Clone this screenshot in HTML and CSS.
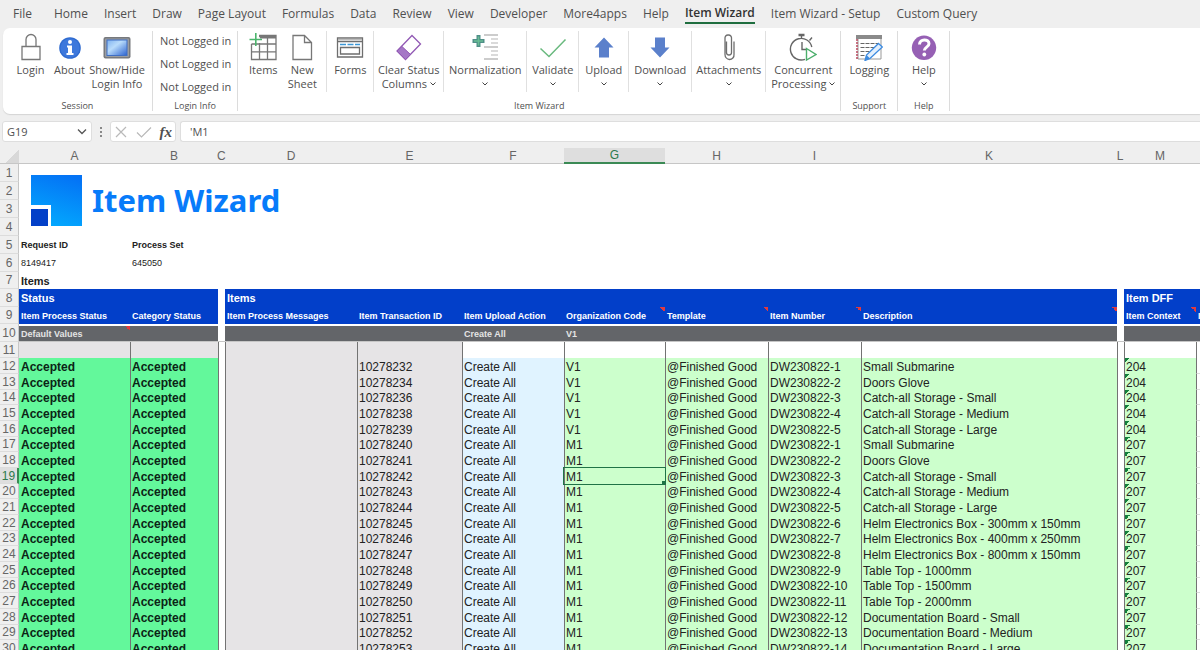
FILE: index.html
```html
<!DOCTYPE html>
<html lang="en">
<head>
<meta charset="utf-8">
<title>Item Wizard</title>
<link rel="stylesheet" href="styles.css">
</head>
<body>
<nav class="tabs">
  <button class="tab tab-file">File</button>
  <button class="tab">Home</button>
  <button class="tab">Insert</button>
  <button class="tab">Draw</button>
  <button class="tab">Page Layout</button>
  <button class="tab">Formulas</button>
  <button class="tab">Data</button>
  <button class="tab">Review</button>
  <button class="tab">View</button>
  <button class="tab">Developer</button>
  <button class="tab">More4apps</button>
  <button class="tab">Help</button>
  <button class="tab active">Item Wizard</button>
  <button class="tab">Item Wizard - Setup</button>
  <button class="tab">Custom Query</button>
</nav>

<section class="ribbon">
  <div class="group">
    <div class="tools tools-session">
      <button class="tool">
        <svg class="icon" viewBox="0 0 28 28" fill="none" stroke="#777" stroke-width="1.3"><path d="M5 13.5h18v13H5z"/><path d="M9 13.500V6.500a5 5 0 0 1 10 0v7"/></svg>
        <span>Login</span>
      </button>
      <button class="tool">
        <svg class="icon" viewBox="0 0 28 28"><circle cx="14" cy="15" r="10.800" fill="#2f6bd0"/><circle cx="14" cy="15" r="9.500" fill="#3d78dc"/><circle cx="14" cy="9" r="2" fill="#fff"/><path d="M11 12.500h5v7.500h1.500v2h-7v-2H12v-5.500h-1z" fill="#fff"/></svg>
        <span>About</span>
      </button>
      <button class="tool">
        <svg class="icon" viewBox="0 0 28 28"><defs><linearGradient id="screen" x1="0" y1="0" x2="1" y2="1"><stop offset="0" stop-color="#7fb2f0"/><stop offset=".4" stop-color="#b9dcfb"/><stop offset="1" stop-color="#2b62d0"/></linearGradient></defs><rect x=".5" y="4" width="27" height="21.500" rx="2" fill="#77797d"/><rect x="2" y="5.500" width="24" height="18.500" rx="1" fill="#9a9da1"/><rect x="4" y="7" width="20" height="15.500" fill="url(#screen)" stroke="#3f6fc4"/></svg>
        <span>Show/Hide<br>Login Info</span>
      </button>
    </div>
    <div class="group-name">Session</div>
  </div>

  <div class="group">
    <div class="login-info">
      <span>Not Logged in</span>
      <span>Not Logged in</span>
      <span>Not Logged in</span>
    </div>
    <div class="group-name">Login Info</div>
  </div>

  <div class="group">
    <div class="tools tools-wizard">
      <button class="tool">
        <svg class="icon" viewBox="0 0 28 28" fill="none" stroke="#777"><path d="M10 2.500h17v24H2.500V11M10 3.500h17M2.500 11h24.500M2.500 18.800h24.500M10.500 10v16.500M18.500 5v21.500" stroke-width="1.300"/><path d="M11 2.500h16v3H11z" fill="#777" stroke="none"/><path d="M6.800 0v13M.5 6.500h12.500" stroke="#4bb56c" stroke-width="1.600"/></svg>
        <span>Items</span>
      </button>
      <button class="tool tool-sheet">
        <svg class="icon" viewBox="0 0 28 28" fill="none" stroke="#777" stroke-width="1.300"><path d="M5 2.500h11.500l7 7v17H5zM16.500 2.500v7h7"/></svg>
        <span>New<br>Sheet</span>
      </button>
      <button class="tool divided">
        <svg class="icon" viewBox="0 0 28 28" fill="none" stroke="#6e6e6e" stroke-width="1.300"><path d="M1.500 5h25v19h-25zM1.500 8.500h25M4.500 14.500h19v6.500h-19z"/><path d="M2 6.500h24" stroke="#bbb"/><path d="M4 11.500h20" stroke="#3b97d6" stroke-dasharray="6 1.500"/></svg>
        <span>Forms</span>
      </button>
      <button class="tool divided">
        <svg class="icon" viewBox="0 0 28 28"><path d="M17 2.500 25.500 11 10.500 26.500 2 18z" fill="#fff" stroke="#9158b4" stroke-width="1.300"/><path d="M7 13.500 15.500 21.500 10.500 26.500 2 18z" fill="#a577c6" stroke="#9158b4"/></svg>
        <span>Clear Status<br>Columns<svg class="caret beside" viewBox="0 0 6 4"><path d="M.5.5 3 3 5.500.5"/></svg></span>
      </button>
      <button class="tool divided">
        <svg class="icon" viewBox="0 0 28 28" fill="none"><path d="M13 2h14M13 14h14M13 26h14" stroke="#999"/><path d="M20 6h7M20 10h7M20 18h7M20 22h7" stroke="#b5b5b5"/><path d="M7.500 2v12M1.500 8h12" stroke="#4f8f88" stroke-width="4"/><path d="M7.500 3.500v9M3 8h9" stroke="#68bd93" stroke-width="1.500"/></svg>
        <span>Normalization<br><svg class="caret" viewBox="0 0 6 4"><path d="M.5.5 3 3 5.500.5"/></svg></span>
      </button>
      <button class="tool divided">
        <svg class="icon" viewBox="0 0 28 28" fill="none" stroke="#69b97e" stroke-width="1.500"><path d="M1.500 15.500 10 23.500 26.500 6.500"/></svg>
        <span>Validate<br><svg class="caret" viewBox="0 0 6 4"><path d="M.5.5 3 3 5.500.5"/></svg></span>
      </button>
      <button class="tool divided">
        <svg class="icon" viewBox="0 0 28 28" fill="#5b80cb"><path d="M14 4.500 23.500 14.500H19V24.500H9V14.500H4.500z"/></svg>
        <span>Upload<br><svg class="caret" viewBox="0 0 6 4"><path d="M.5.5 3 3 5.500.5"/></svg></span>
      </button>
      <button class="tool divided">
        <svg class="icon" viewBox="0 0 28 28" fill="#5b80cb"><path d="M14 24.500 23.500 14.500H19V4.500H9V14.500H4.500z"/></svg>
        <span>Download<br><svg class="caret" viewBox="0 0 6 4"><path d="M.5.5 3 3 5.500.5"/></svg></span>
      </button>
      <button class="tool divided">
        <svg class="icon" viewBox="0 0 28 28" fill="none" stroke="#6e6e6e" stroke-width="1.300"><path d="M11.500 8.500v11a2.500 2.500 0 0 0 5 0V5.500a3 3 0 0 0-3-3.500h-.5a3 3 0 0 0-3 3.500v16a5 5 0 0 0 4.500 5 4.500 4.500 0 0 0 4.500-5V8.500"/></svg>
        <span>Attachments<br><svg class="caret" viewBox="0 0 6 4"><path d="M.5.5 3 3 5.500.5"/></svg></span>
      </button>
      <button class="tool divided">
        <svg class="icon" viewBox="0 0 28 28" fill="none" stroke="#666" stroke-width="1.400"><path d="M16 26.300A10.800 10.800 0 1 1 22.800 14M12.500 2v3.500M13 9v7.500h4M20.500 7.500l2.500-3"/><path d="M9.500 2h6" stroke-width="2.500"/><path d="M17.500 15.500 27 21.500l-9.500 5.500z" fill="#fff" stroke="#4bae6b"/></svg>
        <span>Concurrent<br>Processing<svg class="caret beside" viewBox="0 0 6 4"><path d="M.5.5 3 3 5.500.5"/></svg></span>
      </button>
    </div>
    <div class="group-name">Item Wizard</div>
  </div>

  <div class="group">
    <div class="tools tools-single">
      <button class="tool">
        <svg class="icon" viewBox="0 0 28 28" fill="none" stroke="#666"><path d="M3 2.500h23V26H3z" stroke="#999"/><path d="M1 2h26v4H1z" fill="#8a8a8a" stroke="none"/><path d="M2 6v20" stroke="#b8455c" stroke-width="1.500" stroke-dasharray="2 1"/><path d="M5.500 10.500h18M5.500 14.500h14M5.500 18.500h9M5.500 22.500h5" stroke-dasharray="4 1"/><path d="M23.500 10.500 27.300 14 15 25.500l-5 2 1.500-5.500z" fill="#e4f0fd" stroke="#3d8be0" stroke-width="1.300"/><path d="M10 27.500l1.500-5.500 3.500 3.500z" fill="#3d8be0" stroke="none"/></svg>
        <span>Logging</span>
      </button>
    </div>
    <div class="group-name">Support</div>
  </div>

  <div class="group">
    <div class="tools tools-help">
      <button class="tool">
        <svg class="icon" viewBox="0 0 28 28"><circle cx="14" cy="14.800" r="12.200" fill="#9660b4"/><path d="M9.500 11.500c0-6 9.500-6 9.500-.8 0 3.300-4.700 3.500-4.700 6.800" fill="none" stroke="#fff" stroke-width="3"/><circle cx="14.300" cy="21.500" r="1.900" fill="#fff"/></svg>
        <span>Help<br><svg class="caret" viewBox="0 0 6 4"><path d="M.5.5 3 3 5.500.5"/></svg></span>
      </button>
    </div>
    <div class="group-name">Help</div>
  </div>
</section>

<section class="formula-bar">
  <div class="name-box">
    <input class="name-input" aria-label="Name box" value="G19">
    <button class="name-drop" aria-label="Show names"><svg width="10" height="6" viewBox="0 0 10 6" fill="none" stroke="#555" stroke-width="1.300"><path d="M1 .5 5 4.500 9 .5"/></svg></button>
  </div>
  <svg class="grip" viewBox="0 0 2 12" fill="#888"><path d="M0 1h2v2H0zM0 5h2v2H0zM0 9h2v2H0z"/></svg>
  <div class="entry-buttons">
    <button class="entry" aria-label="Cancel"><svg width="14" height="14" viewBox="0 0 14 14" fill="none" stroke="#b9b9b9" stroke-width="1.200"><path d="M2 2l10 10M12 2 2 12"/></svg></button>
    <button class="entry" aria-label="Enter"><svg width="16" height="14" viewBox="0 0 16 14" fill="none" stroke="#b9b9b9" stroke-width="1.200"><path d="M1 7.500 5.500 12 15 2.500"/></svg></button>
    <button class="entry fx" aria-label="Insert function">fx</button>
  </div>
  <input class="formula" aria-label="Formula" value="'M1">
</section>

<main class="sheet">
  <table class="grid">
    <colgroup>
      <col class="w-num"><col class="w-a"><col class="w-b"><col class="w-gap"><col class="w-d"><col class="w-e"><col class="w-f"><col class="w-g"><col class="w-h"><col class="w-i"><col class="w-k"><col class="w-gap"><col class="w-m"><col>
    </colgroup>
    <thead>
      <tr class="letters">
        <th class="corner"></th><th>A</th><th>B</th><th class="narrow">C</th><th>D</th><th>E</th><th>F</th><th class="current">G</th><th>H</th><th>I</th><th>K</th><th class="narrow">L</th><th>M</th><th></th>
      </tr>
    </thead>
    <tbody>
      <tr class="tall"><th>1</th><td colspan="13" rowspan="4">
        <div class="brand">
          <svg class="logo" viewBox="0 0 51 51"><defs><linearGradient id="tile" x1=".7" y1="0" x2=".4" y2="1"><stop offset="0" stop-color="#0473f5"/><stop offset="1" stop-color="#03a8fe"/></linearGradient></defs><path d="M0 0h51v51H20V30H0z" fill="url(#tile)"/><path d="M0 34h17v17H0z" fill="#0340c8"/></svg>
          <span class="brand-name">Item Wizard</span>
        </div>
      </td></tr>
      <tr class="tall"><th>2</th></tr>
      <tr class="tall"><th>3</th></tr>
      <tr class="tall"><th>4</th></tr>
      <tr class="tall meta"><th>5</th><td class="strong">Request ID</td><td class="strong" colspan="12">Process Set</td></tr>
      <tr class="tall meta"><th>6</th><td>8149417</td><td colspan="12">645050</td></tr>
      <tr class="medium"><th>7</th><td class="title" colspan="13">Items</td></tr>
      <tr class="tall"><th>8</th><td class="blue title" colspan="2">Status</td><td></td><td class="blue title" colspan="7">Items</td><td></td><td class="blue title" colspan="2">Item DFF</td></tr>
      <tr class="medium fields"><th>9</th><td class="blue">Item Process Status</td><td class="blue">Category Status</td><td></td><td class="blue">Item Process Messages</td><td class="blue">Item Transaction ID</td><td class="blue">Item Upload Action</td><td class="blue note">Organization Code</td><td class="blue note">Template</td><td class="blue note">Item Number</td><td class="blue note">Description</td><td></td><td class="blue note">Item Context</td><td class="blue">I</td></tr>
      <tr class="tall defaults"><th>10</th><td class="dark note">Default Values</td><td class="dark"></td><td></td><td class="dark"></td><td class="dark"></td><td class="dark">Create All</td><td class="dark">V1</td><td class="dark"></td><td class="dark"></td><td class="dark"></td><td></td><td class="dark"></td><td class="dark"></td></tr>
      <tr class="line"><th>11</th><td class="gray"></td><td class="gray edge"></td><td class="edge gap"></td><td class="gray edge"></td><td class="gray edge"></td><td class="edge"></td><td class="edge"></td><td class="edge"></td><td class="edge"></td><td class="edge"></td><td class="edge"></td><td class="edge"></td><td class="edge"></td></tr>
    </tbody>
    <tbody id="records" class="records"></tbody>
  </table>
</main>
<script src="rows.js"></script>
</body>
</html>
```

FILE: rows.js
```js
const records = [
  [12, 10278232, "V1", 1, "Small Submarine", 204],
  [13, 10278234, "V1", 2, "Doors Glove", 204],
  [14, 10278236, "V1", 3, "Catch-all Storage - Small", 204],
  [15, 10278238, "V1", 4, "Catch-all Storage - Medium", 204],
  [16, 10278239, "V1", 5, "Catch-all Storage - Large", 204],
  [17, 10278240, "M1", 1, "Small Submarine", 207],
  [18, 10278241, "M1", 2, "Doors Glove", 207],
  [19, 10278242, "M1", 3, "Catch-all Storage - Small", 207],
  [20, 10278243, "M1", 4, "Catch-all Storage - Medium", 207],
  [21, 10278244, "M1", 5, "Catch-all Storage - Large", 207],
  [22, 10278245, "M1", 6, "Helm Electronics Box - 300mm x 150mm", 207],
  [23, 10278246, "M1", 7, "Helm Electronics Box - 400mm x 250mm", 207],
  [24, 10278247, "M1", 8, "Helm Electronics Box - 800mm x 150mm", 207],
  [25, 10278248, "M1", 9, "Table Top - 1000mm", 207],
  [26, 10278249, "M1", 10, "Table Top - 1500mm", 207],
  [27, 10278250, "M1", 11, "Table Top - 2000mm", 207],
  [28, 10278251, "M1", 12, "Documentation Board - Small", 207],
  [29, 10278252, "M1", 13, "Documentation Board - Medium", 207],
  [30, 10278253, "M1", 14, "Documentation Board - Large", 207]
];
const selectedRow = 19;

document.getElementById("records").innerHTML = records.map(([row, id, org, item, text, context]) => {
  const selected = row === selectedRow;
  return `<tr class="line"><th${selected ? ' class="current"' : ""}>${row}</th>
    <td class="status">Accepted</td><td class="status edge">Accepted</td><td class="edge gap"></td>
    <td class="gray edge"></td><td class="gray edge">${id}</td><td class="sky edge">Create All</td>
    <td class="mint edge${selected ? " selected" : ""}">${org}</td><td class="mint edge">@Finished Good</td>
    <td class="mint edge">DW230822-${item}</td><td class="mint edge">${text}</td><td class="edge"></td>
    <td class="mint edge flagged">${context}</td><td class="edge ruled"></td></tr>`;
}).join("");
```

FILE: styles.css
```css
* {
  box-sizing: border-box;
}

body {
  margin: 0;
  height: 100vh;
  overflow: hidden;
  display: flex;
  flex-direction: column;
  background: #efefef;
  color: #505050;
  font-family: "Open Sans", "Noto Sans", sans-serif;
  font-size: 11px;
}

button,
input {
  margin: 0;
  padding: 0;
  border: 0;
  background: none;
  color: inherit;
  font: inherit;
}

/* Tab strip */
.tabs {
  display: flex;
  flex: none;
  gap: 16px;
  height: 28px;
  padding: 4px 13px;
}

.tab {
  flex: none;
  font-size: 12px;
  line-height: 18px;
  white-space: nowrap;
}

.tab-file {
  margin-right: 6px;
}

.tab.active {
  color: #333;
  font-weight: 600;
  border-bottom: 2px solid #1f6e3f;
}

/* Ribbon */
.ribbon {
  display: flex;
  flex: none;
  height: 86px;
  margin-left: 3px;
  padding: 3px 0;
  background: #fff;
  border-radius: 7px 0 0 7px;
  box-shadow: 0 1px 1px #d4d4d4;
}

.group {
  display: flex;
  flex-direction: column;
  justify-content: space-between;
  border-right: 1px solid #dcdcdc;
}

.group-name {
  font-size: 9px;
  line-height: 11px;
  text-align: center;
}

.tools {
  display: grid;
}

.tools-session {
  grid-template-columns: 39px 39px 56px;
  padding: 0 7px 0 8px;
}

.tools-wizard {
  grid-template-columns: 50px 38px 47px 70px 83px 52px 50px 63px 74px 75px;
}

.tools-single {
  grid-template-columns: 56px;
}

.tools-help {
  grid-template-columns: 51px;
}

.tool {
  display: flex;
  flex-direction: column;
  align-items: center;
  height: 61px;
  padding-top: 2px;
  line-height: 14px;
  white-space: nowrap;
  text-align: center;
}

.tool.divided {
  border-left: 1px solid #e0e0e0;
}

.tool-sheet {
  padding-right: 10px;
}

.icon {
  flex: none;
  width: 28px;
  height: 28px;
  margin-bottom: 2px;
}

.caret {
  width: 6px;
  height: 4px;
  vertical-align: 2px;
  fill: none;
  stroke: #444;
}

.caret.beside {
  margin-left: 3px;
}

.login-info {
  display: grid;
  gap: 9px;
  padding: 3px 6px 0 7px;
  line-height: 14px;
}

/* Formula bar */
.formula-bar {
  display: grid;
  flex: none;
  grid-template-columns: 90px 18px 66px 1fr;
  align-items: center;
  height: 29px;
  padding: 7px 0 1px 2px;
}

.name-box,
.entry-buttons,
.formula {
  height: 21px;
  background: #fff;
  border: 1px solid #dedede;
  border-radius: 3px;
}

.name-box {
  display: flex;
  padding: 0 4px;
}

.name-input {
  flex: 1;
  min-width: 0;
}

.name-drop {
  display: flex;
  align-items: center;
}

.grip {
  justify-self: center;
  width: 2px;
  height: 12px;
}

.entry-buttons {
  display: flex;
  align-items: center;
  justify-content: space-between;
  padding: 0 3px;
}

.entry {
  display: flex;
}

.fx {
  font: italic bold 15px/18px "Liberation Serif", serif;
}

.formula {
  margin-left: 4px;
  padding-left: 9px;
  border-right: 0;
  border-radius: 3px 0 0 3px;
}

/* Worksheet */
.sheet {
  flex: 1;
  min-height: 0;
  overflow: hidden;
}

.grid {
  width: 100%;
  min-width: 1200px;
  table-layout: fixed;
  border-spacing: 0;
  background: #fff;
  color: #222;
  font-family: "Liberation Sans", Arial, sans-serif;
  font-size: 12px;
}

.w-num { width: 19px; }
.w-a { width: 111px; }
.w-b { width: 88px; }
.w-gap { width: 7px; }
.w-d { width: 132px; }
.w-e { width: 105px; }
.w-f { width: 102px; }
.w-g { width: 101px; }
.w-h { width: 103px; }
.w-i { width: 93px; }
.w-k { width: 256px; }
.w-m { width: 72px; }

.grid td,
.grid th {
  padding: 0 2px;
  overflow: hidden;
  line-height: 14px;
  white-space: nowrap;
  text-align: left;
}

.grid td:last-child {
  padding-right: 0;
}

.grid tbody th {
  padding: 0;
  background: #efefef;
  border-right: 1px solid #c6c6c6;
  border-bottom: 1px solid #dcdcdc;
  color: #666;
  font-weight: 400;
  text-align: center;
}

.letters {
  height: 21px;
}

.grid .letters th {
  padding: 6px 0 0;
  background: #efefef;
  border-bottom: 1px solid #c6c6c6;
  color: #666;
  font-weight: 400;
  line-height: 13px;
  text-align: center;
}

.grid .letters .narrow {
  overflow: visible;
  text-indent: -1px;
}

.grid .letters .corner {
  background: linear-gradient(135deg, #efefef 66%, #d8d8d8 66%);
}

.grid .letters .current {
  background: linear-gradient(#efefef 5px, #dedede 5px);
  border-bottom: 2px solid #3b8a55;
  color: #2c7a4b;
}

.tall { height: 18px; }
.medium { height: 17px; }
.line { height: 16px; }
.records .line:nth-child(3n) { height: 15px; }

.brand {
  display: flex;
  align-items: center;
  gap: 10px;
  padding-left: 10px;
}

.logo {
  width: 51px;
  height: 51px;
}

.brand-name {
  color: #077bfa;
  font: bold 31px/44px "Noto Sans", "Open Sans", sans-serif;
}

.meta,
.fields,
.defaults {
  font-size: 9px;
}

.meta th,
.fields th,
.defaults th {
  font-size: 12px;
}

.strong,
.title,
.fields,
.defaults {
  font-weight: 700;
}

.title {
  font-size: 11px;
}

.blue {
  background: #023fc9;
  color: #fff;
}

.dark {
  background: #636569;
  color: #e4e4e4;
}

.grid .defaults td {
  border-top: 2px solid #fff;
  border-bottom: 1px solid #c6c6c6;
}

.note {
  background-image: linear-gradient(45deg, transparent 50%, #e03a3e 50%);
  background-position: top right;
  background-repeat: no-repeat;
  background-size: 5px 5px;
}

.gray { background: #e6e4e6; }
.sky { background: #e0f3ff; }
.mint { background: #ccffcc; }

.status {
  background: #63f89b;
  color: #0c2416;
  font-weight: 700;
}

.grid .edge {
  padding-left: 1px;
  border-left: 1px solid #737373;
}

.grid .line td {
  padding-top: 1px;
  line-height: 14px;
}

.ruled {
  border-bottom: 1px solid #dcdcdc;
}

.flagged {
  background-image: linear-gradient(135deg, #14803c 50%, transparent 50%);
  background-repeat: no-repeat;
  background-size: 5px 5px;
}

.grid tbody .current {
  background: #dedede;
  border-right: 2px solid #3b8a55;
  color: #2c7a4b;
}

.selected {
  background-image: linear-gradient(#1f7346, #1f7346);
  background-position: bottom right;
  background-repeat: no-repeat;
  background-size: 3px 3px;
  outline: 1px solid #1f7346;
}
```
